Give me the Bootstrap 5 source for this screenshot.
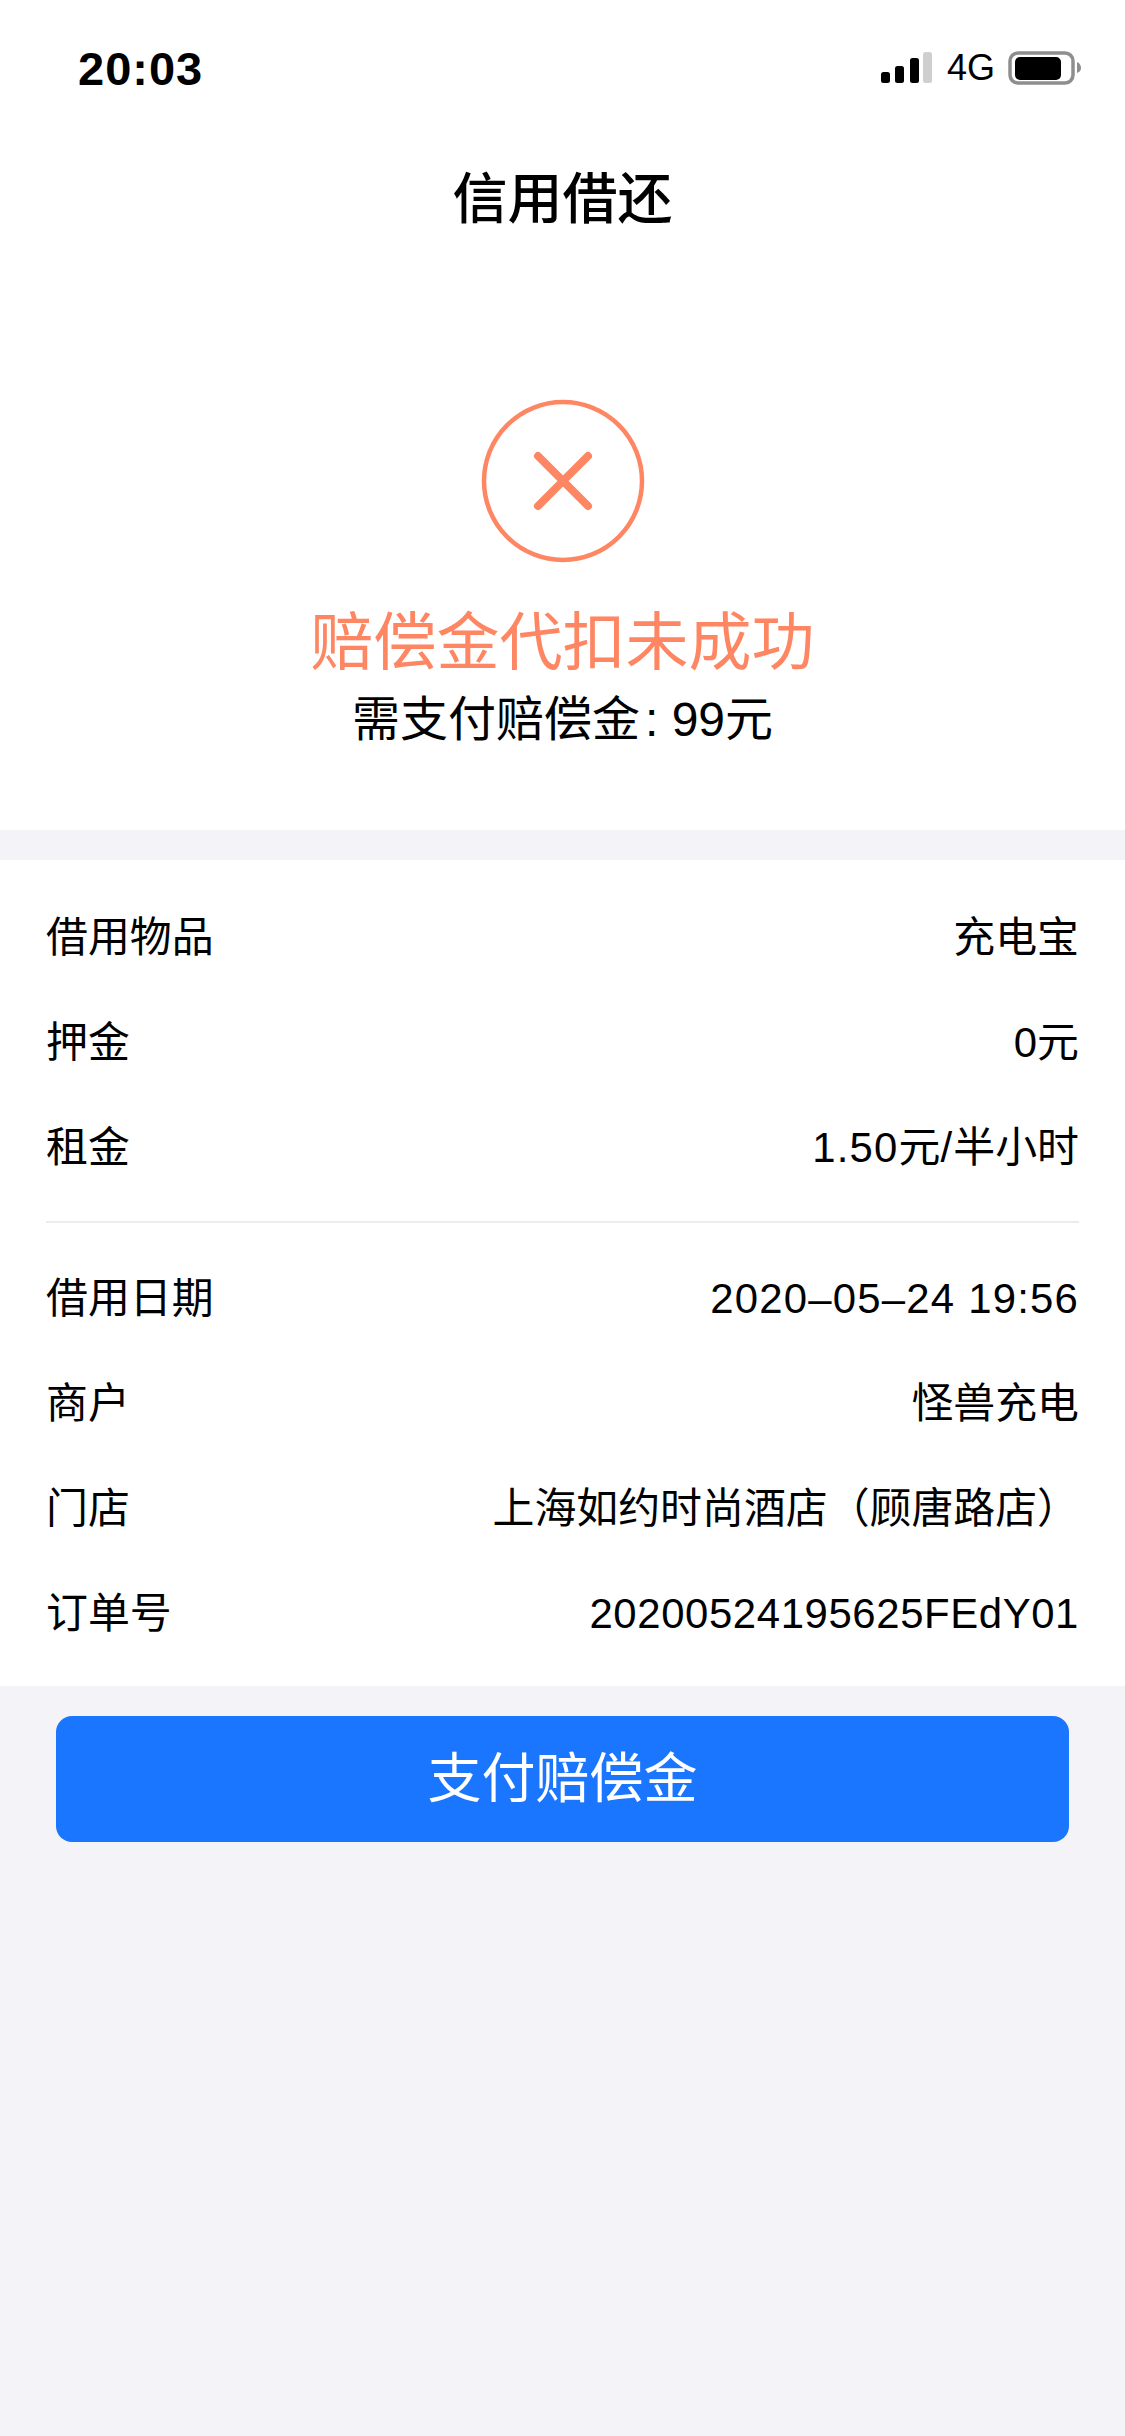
<!DOCTYPE html>
<html lang="zh-CN">
<head>
    <meta charset="UTF-8">
    <meta name="viewport" content="width=device-width, initial-scale=1.0">
    <title>信用借还</title>
    <link href="https://cdn.jsdelivr.net/npm/bootstrap@5.3.0/dist/css/bootstrap.min.css" rel="stylesheet">
    <style>
        body {
            background-color: #f3f3f8;
            color: #000;
            font-family: "Liberation Sans", "Noto Sans CJK SC", sans-serif;
            min-height: 2436px;
        }
        .status-bar {
            height: 136px;
            padding: 0 43px 0 78px;
        }
        .status-time {
            font-size: 47px;
            font-weight: 700;
            line-height: 1;
            letter-spacing: 1px;
        }
        .status-net {
            font-size: 36px;
            line-height: 1;
            margin: 0 13px 0 14px;
        }
        .page-title {
            font-size: 55px;
            font-weight: 500;
            line-height: 1.2;
            height: 257px;
            padding-top: 30px;
        }
        .result-box {
            height: 437px;
            padding-top: 5px;
        }
        .result-title {
            color: #fe8662;
            font-size: 63px;
            line-height: 1;
            margin-top: 47px;
        }
        .result-sub {
            font-size: 48px;
            line-height: 1;
            margin-top: 22px;
        }
        .result-colon {
            margin-left: 5px;
        }
        .info-box {
            margin-top: 30px;
            padding: 26px 46px 19px;
            font-size: 41.9px;
        }
        .info-row {
            height: 105px;
        }
        .info-line {
            margin: 20px 0 24px;
            border-top: 2px solid #ececec;
        }
        .num-wide {
            letter-spacing: 1.2px;
        }
        .num-order {
            letter-spacing: 0.6px;
        }
        .btn-wrap {
            padding: 30px 56px 0;
        }
        .pay-btn {
            height: 126px;
            background-color: #1a76ff;
            border: 0;
            border-radius: 16px;
            font-size: 54px;
            line-height: 1;
        }
    </style>
</head>
<body>
    <div class="bg-white">
        <div class="status-bar d-flex justify-content-between align-items-center">
            <span class="status-time">20:03</span>
            <div class="d-flex align-items-center">
                <svg width="52" height="32" viewBox="0 0 52 32">
                    <rect x="0" y="20" width="9" height="11" rx="2.5" fill="#000"/>
                    <rect x="14" y="14" width="9" height="17" rx="2.5" fill="#000"/>
                    <rect x="29" y="6" width="9" height="25" rx="2.5" fill="#000"/>
                    <rect x="42" y="0" width="9" height="31" rx="2.5" fill="#cfcfcf"/>
                </svg>
                <span class="status-net">4G</span>
                <svg width="74" height="34" viewBox="0 0 74 34">
                    <rect x="2" y="2" width="63" height="30" rx="8" fill="#fff" stroke="#8e8e8e" stroke-width="3.5"/>
                    <rect x="7" y="6" width="46" height="23" rx="5" fill="#000"/>
                    <path d="M69 11 C72 12 73 15 73 17 C73 19 72 21 69 22 Z" fill="#8e8e8e"/>
                </svg>
            </div>
        </div>
        <div class="page-title text-center">信用借还</div>
        <div class="result-box text-center">
            <svg width="166" height="166" viewBox="0 0 166 166" class="d-block mx-auto">
                <circle cx="83" cy="83" r="79" fill="none" stroke="#fe8662" stroke-width="4.5"/>
                <path d="M58 58 L108 108 M108 58 L58 108" fill="none" stroke="#fe8662" stroke-width="8" stroke-linecap="round"/>
            </svg>
            <div class="result-title">赔偿金代扣未成功</div>
            <div class="result-sub">需支付赔偿金<span class="result-colon">:</span> 99元</div>
        </div>
    </div>
    <div class="info-box bg-white">
        <div class="info-row d-flex justify-content-between align-items-center"><span>借用物品</span><span>充电宝</span></div>
        <div class="info-row d-flex justify-content-between align-items-center"><span>押金</span><span>0元</span></div>
        <div class="info-row d-flex justify-content-between align-items-center"><span>租金</span><span><span class="num-wide">1.50</span>元<span class="num-wide">/</span>半小时</span></div>
        <div class="info-line"></div>
        <div class="info-row d-flex justify-content-between align-items-center"><span>借用日期</span><span class="num-wide">2020–05–24 19:56</span></div>
        <div class="info-row d-flex justify-content-between align-items-center"><span>商户</span><span>怪兽充电</span></div>
        <div class="info-row d-flex justify-content-between align-items-center"><span>门店</span><span>上海如约时尚酒店（顾唐路店）</span></div>
        <div class="info-row d-flex justify-content-between align-items-center"><span>订单号</span><span class="num-order">20200524195625FEdY01</span></div>
    </div>
    <div class="btn-wrap">
        <button type="button" class="btn btn-primary pay-btn w-100">支付赔偿金</button>
    </div>
    <script src="https://cdn.jsdelivr.net/npm/bootstrap@5.3.0/dist/js/bootstrap.bundle.min.js"></script>
</body>
</html>
